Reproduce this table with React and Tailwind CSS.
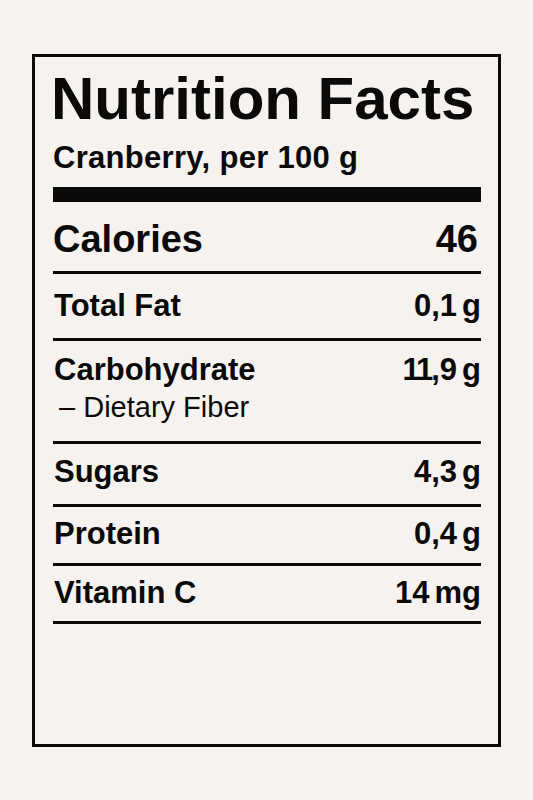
import React from 'react';

const nutrients = [
  { name: 'Total Fat', value: '0,1', unit: 'g', pt: 'pt-[16px]', pb: 'pb-[17px]' },
  { name: 'Carbohydrate', value: '11,9', unit: 'g', pt: 'pt-[13px]', pb: 'pb-[20px]', sub: 'Dietary Fiber' },
  { name: 'Sugars', value: '4,3', unit: 'g', pt: 'pt-[12px]', pb: 'pb-[17px]' },
  { name: 'Protein', value: '0,4', unit: 'g', pt: 'pt-[11px]', pb: 'pb-[14px]' },
  { name: 'Vitamin C', value: '14', unit: 'mg', pt: 'pt-[11px]', pb: 'pb-[13px]' },
];

// "11" in the label is set with a narrow one, so pull those digits together
const Amount = ({ value, unit }) => {
  const tight = value.startsWith('11');
  return (
    <span className="whitespace-nowrap">
      {tight ? (
        <>
          <span className="tracking-[-2px]">11</span>
          {value.slice(2)}
        </>
      ) : (
        value
      )}
      <span className="ml-[5px]">{unit}</span>
    </span>
  );
};

const App = () => {
  return (
    <div className="min-h-screen w-full bg-[#f5f2ef] flex items-center justify-center font-['Liberation_Sans',Arial,sans-serif] text-[#0a0a0a]">
      <div className="w-[469px] h-[693px] border-[3px] border-[#0a0a0a] pl-[18px] pr-[17px] pt-[12px]">
        {/* Encabezado */}
        <h1 className="text-[60px] leading-[60px] font-bold -ml-[2px]">Nutrition Facts</h1>
        <p className="mt-[14px] text-[31px] leading-[29px] font-bold tracking-[0.3px]">Cranberry, per 100 g</p>
        <div className="mt-[15px] h-[15px] bg-[#0a0a0a]" />

        {/* Calorías */}
        <div className="flex items-baseline justify-between pt-[18px] pb-[13px] border-b-[3px] border-[#0a0a0a]">
          <span className="text-[38px] leading-[38px] font-bold">Calories</span>
          <span className="text-[38px] leading-[38px] font-bold pr-[3px]">46</span>
        </div>

        {/* Nutrientes */}
        {nutrients.map((n) => (
          <div key={n.name} className={`pl-[1px] border-b-[3px] border-[#0a0a0a] ${n.pt} ${n.pb}`}>
            <div className="flex items-baseline justify-between text-[31px] leading-[31px] font-bold">
              <span>{n.name}</span>
              <Amount value={n.value} unit={n.unit} />
            </div>
            {n.sub && (
              <div className="mt-[8px] ml-[5px] text-[29px] leading-[28px]">– {n.sub}</div>
            )}
          </div>
        ))}
      </div>
    </div>
  );
};

export default App;
